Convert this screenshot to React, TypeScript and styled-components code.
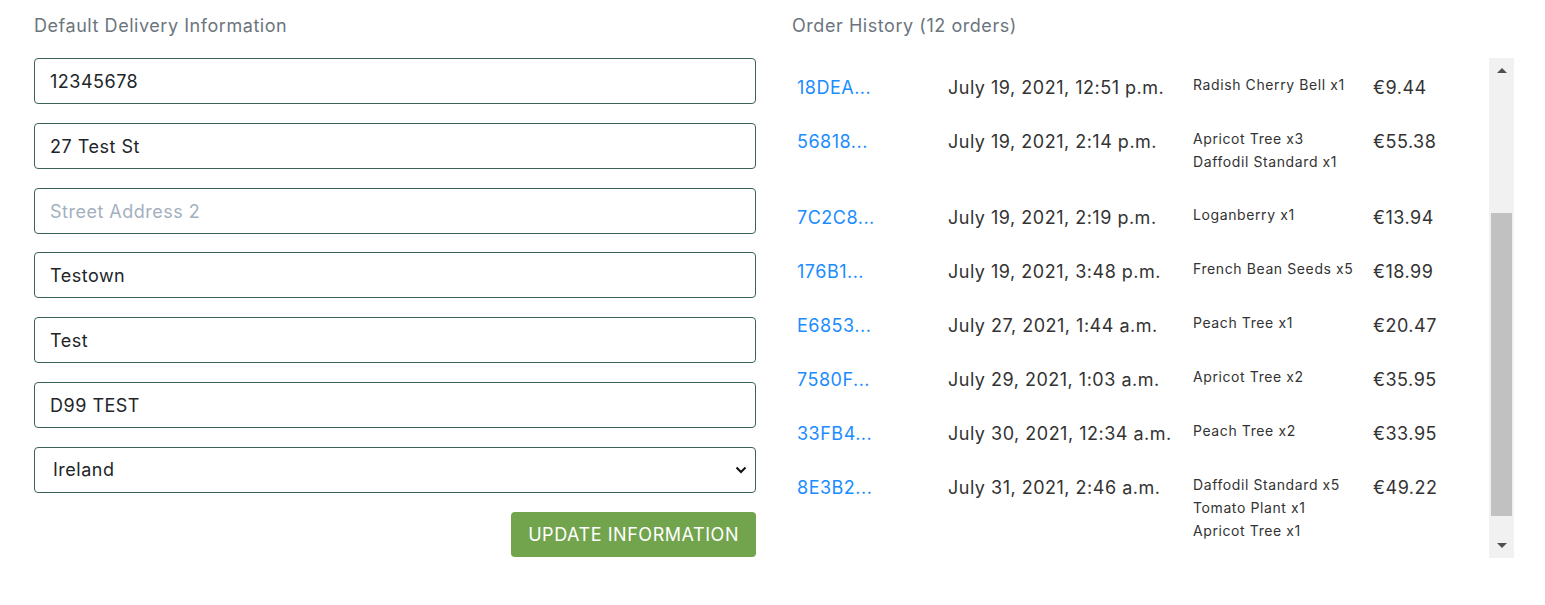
import styled, { createGlobalStyle } from 'styled-components';

const GlobalStyle = createGlobalStyle`
  html, body {
    margin: 0;
    padding: 0;
    background: #fff;
    font-family: 'Inter', 'Liberation Sans', sans-serif;
    letter-spacing: 0.5px;
    color: #212529;
  }
  * {
    box-sizing: border-box;
  }
`;

const Page = styled.div`
  display: grid;
  grid-template-columns: 722px 722px;
  column-gap: 36px;
  padding: 13px 0 0 34px;
`;

const Column = styled.section`
  display: flex;
  flex-direction: column;
`;

const Heading = styled.h2`
  margin: 0 0 19px;
  font-size: 18px;
  font-weight: 400;
  line-height: 26px;
  letter-spacing: 0.55px;
  color: #6c757d;
`;

const Form = styled.form`
  display: flex;
  flex-direction: column;
  gap: 18.8px;
`;

const Field = styled.input`
  width: 100%;
  height: 46px;
  padding: 1px 15px 0;
  border: 1px solid #3b6455;
  border-radius: 4px;
  font-family: inherit;
  font-size: 18px;
  letter-spacing: 0.5px;
  color: #212529;
  outline: none;

  &::placeholder {
    color: #a4b0be;
  }
`;

const SelectWrap = styled.div`
  position: relative;
`;

const Select = styled.select`
  width: 100%;
  height: 46px;
  padding: 0 40px 0 18px;
  border: 1px solid #3b6455;
  border-radius: 4px;
  background: #fff;
  appearance: none;
  font-family: inherit;
  font-size: 18px;
  letter-spacing: 0.5px;
  color: #212529;
  outline: none;
`;

const Chevron = styled.svg`
  position: absolute;
  right: 9px;
  top: 19px;
  pointer-events: none;
`;

const Actions = styled.div`
  display: flex;
  justify-content: flex-end;
`;

const SubmitButton = styled.button`
  height: 45px;
  padding: 0 17px;
  border: none;
  border-radius: 4px;
  background: #72a34d;
  color: #fff;
  font-family: inherit;
  font-size: 18px;
  letter-spacing: 0.55px;
  cursor: pointer;
`;

const ScrollBox = styled.div`
  display: flex;
  height: 500px;
  background: #fff;
`;

const ListViewport = styled.div`
  flex: 1;
  overflow: hidden;
  padding-top: 3px;
`;

const OrderTable = styled.div`
  display: flex;
  flex-direction: column;
`;

const Row = styled.div`
  display: grid;
  grid-template-columns: 151px 245px 180px 1fr;
  align-items: start;
  padding: 13px 0 13px 5px;
`;

const OrderLink = styled.a`
  font-size: 18px;
  line-height: 28px;
  color: #1a8cff;
  text-decoration: none;
`;

const Cell = styled.div`
  font-size: 18px;
  line-height: 28px;
  color: #333;
`;

const Items = styled.div`
  display: flex;
  flex-direction: column;
  margin-top: -1.5px;
  padding-bottom: 5.5px;
`;

const Item = styled.span`
  font-size: 14px;
  line-height: 23px;
  letter-spacing: 0.6px;
  color: #333;
`;

const Scrollbar = styled.div`
  width: 25px;
  display: flex;
  flex-direction: column;
  background: #f1f1f1;
`;

const ArrowButton = styled.div<{ $down?: boolean }>`
  height: 25px;
  display: flex;
  align-items: center;
  justify-content: center;

  &::before {
    content: '';
    border-left: 5px solid transparent;
    border-right: 5px solid transparent;
    ${({ $down }) =>
      $down ? 'border-top: 5px solid #505050;' : 'border-bottom: 5px solid #505050;'}
  }
`;

const Track = styled.div`
  flex: 1;
  display: flex;
  flex-direction: column;
  padding: 0 2px;
`;

const Thumb = styled.div<{ $offset: number; $size: number }>`
  margin-top: ${({ $offset }) => $offset}px;
  height: ${({ $size }) => $size}px;
  background: #c1c1c1;
`;

type Order = {
  id: string;
  date: string;
  items: string[];
  total: string;
};

const orders: Order[] = [
  { id: '18DEA...', date: 'July 19, 2021, 12:51 p.m.', items: ['Radish Cherry Bell x1'], total: '€9.44' },
  { id: '56818...', date: 'July 19, 2021, 2:14 p.m.', items: ['Apricot Tree x3', 'Daffodil Standard x1'], total: '€55.38' },
  { id: '7C2C8...', date: 'July 19, 2021, 2:19 p.m.', items: ['Loganberry x1'], total: '€13.94' },
  { id: '176B1...', date: 'July 19, 2021, 3:48 p.m.', items: ['French Bean Seeds x5'], total: '€18.99' },
  { id: 'E6853...', date: 'July 27, 2021, 1:44 a.m.', items: ['Peach Tree x1'], total: '€20.47' },
  { id: '7580F...', date: 'July 29, 2021, 1:03 a.m.', items: ['Apricot Tree x2'], total: '€35.95' },
  { id: '33FB4...', date: 'July 30, 2021, 12:34 a.m.', items: ['Peach Tree x2'], total: '€33.95' },
  { id: '8E3B2...', date: 'July 31, 2021, 2:46 a.m.', items: ['Daffodil Standard x5', 'Tomato Plant x1', 'Apricot Tree x1'], total: '€49.22' },
];

const App = () => {
  return (
    <>
      <GlobalStyle />
      <Page>
        <Column>
          <Heading>Default Delivery Information</Heading>
          <Form onSubmit={(e) => e.preventDefault()}>
            <Field defaultValue="12345678" />
            <Field defaultValue="27 Test St" />
            <Field placeholder="Street Address 2" />
            <Field defaultValue="Testown" />
            <Field defaultValue="Test" />
            <Field defaultValue="D99 TEST" />
            <SelectWrap>
              <Select defaultValue="IE">
                <option value="IE">Ireland</option>
                <option value="GB">United Kingdom</option>
              </Select>
              <Chevron width="12" height="8" viewBox="0 0 12 8">
                <path d="M1.5 1.5 L6 6 L10.5 1.5" fill="none" stroke="#111" strokeWidth="2" />
              </Chevron>
            </SelectWrap>
            <Actions>
              <SubmitButton type="submit">UPDATE INFORMATION</SubmitButton>
            </Actions>
          </Form>
        </Column>

        <Column>
          <Heading>Order History (12 orders)</Heading>
          <ScrollBox>
            <ListViewport>
              <OrderTable>
                {orders.map((order) => (
                  <Row key={order.id}>
                    <OrderLink href="#">{order.id}</OrderLink>
                    <Cell>{order.date}</Cell>
                    <Items>
                      {order.items.map((item) => (
                        <Item key={item}>{item}</Item>
                      ))}
                    </Items>
                    <Cell>{order.total}</Cell>
                  </Row>
                ))}
              </OrderTable>
            </ListViewport>
            <Scrollbar>
              <ArrowButton />
              <Track>
                <Thumb $offset={130} $size={303} />
              </Track>
              <ArrowButton $down />
            </Scrollbar>
          </ScrollBox>
        </Column>
      </Page>
    </>
  );
};

export default App;
